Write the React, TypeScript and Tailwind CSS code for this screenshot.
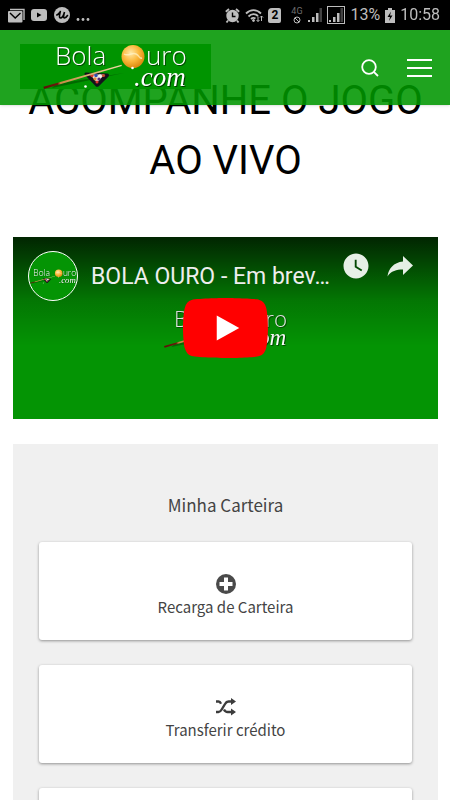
import { useId, type ReactNode } from "react";
import { MdWatchLater } from "react-icons/md";

const WALLET_ACTIONS = [
  { label: "Recarga de Carteira", icon: <PlusCircleIcon /> },
  { label: "Transferir crédito", icon: <ShuffleIcon /> },
];

export default function App() {
  return (
    <div className="h-screen overflow-hidden bg-white font-['Roboto',sans-serif]">
      <div className="sticky top-0 z-10">
        <StatusBar />
        <Header />
      </div>

      <main className="pr-3 pl-[13px]">
        {/* First line slides under the translucent header */}
        <h1 className="-mt-[34px] text-center text-[40px] leading-[60px] text-black">
          ACOMPANHE O JOGO
          <br />
          AO VIVO
        </h1>
        <VideoCard />
        <Wallet />
      </main>
    </div>
  );
}

function StatusBar() {
  return (
    <div className="flex h-[30px] items-center justify-between bg-black pl-2 pr-[10px] text-[#bdbdbd]">
      <div className="flex items-center gap-[6px]">
        <svg viewBox="0 0 17 15" className="h-[15px] w-[17px]" fill="none">
          <path d="M2 1.500h14V12" stroke="currentColor" strokeWidth="1.400" />
          <rect x="0" y="3" width="14.500" height="11.500" rx="1" fill="currentColor" />
          <path d="M2 5l5.200 5L12.500 5" stroke="#000" strokeWidth="1.400" />
        </svg>
        <svg viewBox="0 0 16 12" className="h-3 w-4">
          <rect width="16" height="12" rx="3" fill="currentColor" />
          <path d="M6 3.500v5l4.500-2.500z" fill="#000" />
        </svg>
        <svg viewBox="0 0 16 16" className="ml-px h-4 w-4" fill="none">
          <circle cx="8" cy="8" r="8" fill="currentColor" />
          <path d="M2.800 8C5 7 6.500 4.500 6.300 4.500c-.3 1.500-1.800 6.500.2 6.500 1.800 0 3.500-4 4-6-.5 2-1.700 6 0 6 1.200 0 2-1 3-2.500" stroke="#000" strokeWidth="1.600" strokeLinecap="round" />
        </svg>
        <svg viewBox="0 0 14 16" className="h-4 w-[14px]" fill="currentColor">
          <circle cx="2" cy="12.500" r="1.400" />
          <circle cx="7" cy="12.500" r="1.400" />
          <circle cx="12" cy="12.500" r="1.400" />
        </svg>
      </div>

      <div className="flex items-center gap-[5px]">
        <svg viewBox="0 0 15 15" className="h-[15px] w-[15px]" fill="none">
          <path d="M.8 3.800L4 1M14.200 3.800L11 1M3 12.500L1.500 14.500M12 12.500l1.500 2" stroke="currentColor" strokeWidth="1.800" />
          <circle cx="7.500" cy="8" r="6.200" fill="currentColor" />
          <path d="M7.500 4.500V8.500h3" stroke="#000" strokeWidth="1.400" />
        </svg>
        <svg viewBox="0 0 19 15" className="h-[15px] w-[19px]" fill="none" stroke="currentColor">
          <path d="M1 5.500C5.500 1 11.500 1 16 5.500M3.500 8.500c3-3 7-3 9.500-.5M6 11c1.500-1.500 3-1.500 4.500-.5" strokeWidth="1.800" />
          <circle cx="8.500" cy="12.500" r="1" fill="currentColor" />
          <path d="M13 13.500V8.500m-1.500 3.500l1.500 1.500 1.500-1.500M16.500 8v5M15 9.500L16.500 8 18 9.500" strokeWidth="1" />
        </svg>
        <span className="-ml-px grid h-[15px] w-[13px] place-items-center rounded-[2px] rounded-tl-[4px] bg-[#bdbdbd] text-[12px] leading-none font-bold text-black">
          2
        </span>
        <span className="ml-1 flex w-[13px] flex-col items-center text-[#6e6e6e]">
          <span className="text-[9px] leading-[9px]">4G</span>
          <svg viewBox="0 0 8 8" className="h-2 w-2" fill="none" stroke="#bdbdbd">
            <circle cx="4" cy="4" r="3" />
            <path d="M2 2l4 4" />
          </svg>
        </span>
        <SignalIcon />
        <span className="border border-[#bdbdbd] p-px">
          <SignalIcon />
        </span>
        <span className="text-[16px] leading-5">13%</span>
        <svg viewBox="0 0 10 15" className="h-[15px] w-[10px]">
          <path d="M3 0h4v2h3v13H0V2h3z" fill="currentColor" />
          <path d="M6 3.500L2.500 9H5l-1 4L7.500 7.500H5z" fill="#000" />
        </svg>
        <span className="text-[16px] leading-5">10:58</span>
      </div>
    </div>
  );
}

function SignalIcon() {
  return (
    <svg viewBox="0 0 14 14" className="h-[14px] w-[14px]" fill="currentColor">
      <path d="M0 12h2v2H0zM4 9h2.500v5H4zM8 5h2.500v9H8z" />
      <path d="M11.500 0H14v14h-2.500z" opacity=".35" />
    </svg>
  );
}

function Header() {
  return (
    <header className="flex h-[75px] items-center justify-between bg-[#009600]/88 pl-5 pr-[18px] text-white shadow-sm">
      <a href="#" aria-label="Bola Ouro" className="-mt-[3px] bg-[#009400]">
        <Logo className="h-[45px] w-[191px]" />
      </a>
      <div className="flex items-center gap-7">
        <button aria-label="Buscar">
          <svg viewBox="0 0 18 18" className="h-[18px] w-[18px]" fill="none" stroke="currentColor" strokeWidth="1.800">
            <circle cx="8" cy="8" r="6.800" />
            <path d="M12.800 12.800L17 17" />
          </svg>
        </button>
        <button aria-label="Menu" className="flex w-[25px] flex-col gap-[6px]">
          <span className="h-[2px] bg-white" />
          <span className="h-[2px] bg-white" />
          <span className="h-[2px] bg-white" />
        </button>
      </div>
    </header>
  );
}

function Logo({ className }: { className: string }) {
  const id = useId();
  return (
    <svg viewBox="0 0 191 45" className={className} role="img" aria-label="Bola Ouro .com">
      <defs>
        <radialGradient id={`${id}ball`} cx=".4" cy=".35" r=".65">
          <stop offset="0" stopColor="#ffe9a8" />
          <stop offset=".55" stopColor="#fbb83c" />
          <stop offset="1" stopColor="#dd8a10" />
        </radialGradient>
        <linearGradient id={`${id}cue`} x1="0" x2="1">
          <stop offset="0" stopColor="#5c0f08" />
          <stop offset=".18" stopColor="#6b1a0c" />
          <stop offset=".22" stopColor="#c98a45" />
          <stop offset="1" stopColor="#f0d9a8" />
        </linearGradient>
      </defs>
      <path d="M32 44L104 29l-68 11z" fill="#003d00" opacity=".5" />
      <path d="M66 28.500l21 1c2 0 2.500 1.500 1.500 3L79 42c-1 1.300-3 1-3.500 0L65 31c-1-1.500-.5-2.500 1-2.500z" fill="#15121c" />
      <path d="M70 30.500h14.500L77 38.500z" fill="#e9e2dc" />
      <circle cx="72" cy="31.500" r="1.700" fill="#d73a2b" />
      <circle cx="76" cy="31.500" r="1.700" fill="#2b4fb0" />
      <circle cx="80" cy="32" r="1.700" fill="#f6f1ea" />
      <circle cx="83.500" cy="31.500" r="1.600" fill="#c84c31" />
      <circle cx="75" cy="34.800" r="1.600" fill="#e98a39" />
      <circle cx="79" cy="35" r="1.600" fill="#5a2478" />
      <circle cx="77" cy="38" r="1.500" fill="#d9362d" />
      <circle cx="65.500" cy="42.500" r="1.300" fill="#fff" />
      <path d="M101.500 20.800l.3 1.100L24 45l-.6-2.200z" fill={`url(#${id}cue)`} />
      <g
        className="font-['Open_Sans',sans-serif] font-light drop-shadow-[1px_1px_0px_#004d00]"
        fontSize="26"
        fill="#fff"
      >
        <text x="35" y="21">Bola</text>
        <text x="126" y="21">uro</text>
      </g>
      <circle cx="113" cy="12.500" r="11.500" fill={`url(#${id}ball)`} />
      <path d="M104 10c4 3 8-2 12 0s3 5 6 4" fill="none" stroke="#fff3c8" strokeWidth="1.500" opacity=".7" />
      <circle cx="112.500" cy="24" r="1.300" fill="#fff" />
      <text
        x="114"
        y="42"
        className="font-['Liberation_Serif',serif] italic drop-shadow-[1px_1px_0px_#003d00]"
        fontSize="27"
        fill="#fff"
      >
        .com
      </text>
    </svg>
  );
}

function VideoCard() {
  return (
    <section className="relative mt-[46px] flex h-[182px] items-center justify-center overflow-hidden bg-[#049404]">
      <Logo className="h-[39px] w-[164px]" />
      <div className="absolute inset-0 bg-linear-to-b from-black/75 via-black/20 via-35% to-transparent to-60%" />
      <div className="absolute inset-x-0 top-0 flex items-start pt-[14px] pl-[15px] pr-[25px] text-[#eee]">
        <a
          href="#"
          aria-label="Canal Bola Ouro"
          className="flex h-[50px] w-[50px] shrink-0 items-center justify-center overflow-hidden rounded-full border border-white bg-[#049404]"
        >
          <Logo className="h-[15px] w-[62px] shrink-0" />
        </a>
        <a href="#" className="ml-[13px] flex-1 pt-[10px] text-[23px] leading-8 whitespace-nowrap">
          BOLA OURO - Em brev…
        </a>
        <button aria-label="Assistir mais tarde">
          <MdWatchLater className="h-[30px] w-[30px] text-[#e6efe6]" />
        </button>
        <button aria-label="Compartilhar" className="ml-4 pt-1">
          <svg viewBox="0 0 26 22" className="h-[22px] w-[26px]" fill="#e6efe6">
            <path d="M16 1l10 9.500L16 20v-5.500C9.500 14.500 4 16 .5 21.500 1.500 13.500 6.500 7.500 16 6.500z" />
          </svg>
        </button>
      </div>
      <button aria-label="Reproduzir" className="absolute">
        <svg viewBox="0 0 68 48" className="h-[60px] w-[85px]">
          <path
            d="M66.520 7.740c-.78-2.930-2.490-5.410-5.420-6.190C55.790.13 34 0 34 0S12.210.13 6.900 1.550c-2.930.78-4.630 3.260-5.420 6.190C.06 13.050 0 24 0 24s.06 10.950 1.480 16.260c.78 2.930 2.490 5.410 5.420 6.190C12.210 47.870 34 48 34 48s21.790-.13 27.100-1.550c2.930-.78 4.640-3.260 5.420-6.190C67.940 34.950 68 24 68 24s-.06-10.950-1.480-16.260z"
            fill="#f00"
          />
          <path d="M45 24L27 14v20z" fill="#fff" />
        </svg>
      </button>
    </section>
  );
}

function Wallet() {
  return (
    <section className="mt-[25px] bg-[#f0f0f0] px-[26px] pt-[47px] pb-6 font-['Noto_Sans_CJK_SC',sans-serif] text-[#444]">
      <h2 className="text-center text-[17px] leading-7">Minha Carteira</h2>
      <div className="mt-[23px] flex flex-col gap-[25px]">
        {WALLET_ACTIONS.map((a) => (
          <WalletButton key={a.label} icon={a.icon}>
            {a.label}
          </WalletButton>
        ))}
        <div className="h-[98px] rounded-[3px] bg-white shadow-[0_1px_3px_rgba(0,0,0,0.4)]" />
      </div>
    </section>
  );
}

function WalletButton({ icon, children }: { icon: ReactNode; children: ReactNode }) {
  return (
    <button className="flex h-[98px] w-full flex-col items-center rounded-[3px] bg-white pt-8 text-[15px] leading-[26px] shadow-[0_1px_3px_rgba(0,0,0,0.4)]">
      {icon}
      {children}
    </button>
  );
}

function PlusCircleIcon() {
  return (
    <svg viewBox="0 0 20 20" className="h-5 w-5">
      <circle cx="10" cy="10" r="10" fill="#4a4a4a" />
      <path d="M8 3.500h4V8h4.500v4H12v4.500H8V12H3.500V8H8z" fill="#fff" />
    </svg>
  );
}

function ShuffleIcon() {
  return (
    <svg viewBox="0 0 20 20" className="h-5 w-5" fill="none" stroke="#3c3c3c" strokeWidth="2.400">
      <path d="M0 4.500h2.500c1.500 0 2 1 2.500 2.200M0 15h2.500c2 0 2.600-1.500 3.500-3l3-5c1-1.800 1.500-2.500 3.500-2.500H16M8 12.500c.8 1.600 1.500 2.500 3.500 2.500H16" />
      <path d="M15 1l5 3.500L15 8zM15 11.500l5 3.500-5 3.500z" fill="#3c3c3c" stroke="none" />
    </svg>
  );
}
